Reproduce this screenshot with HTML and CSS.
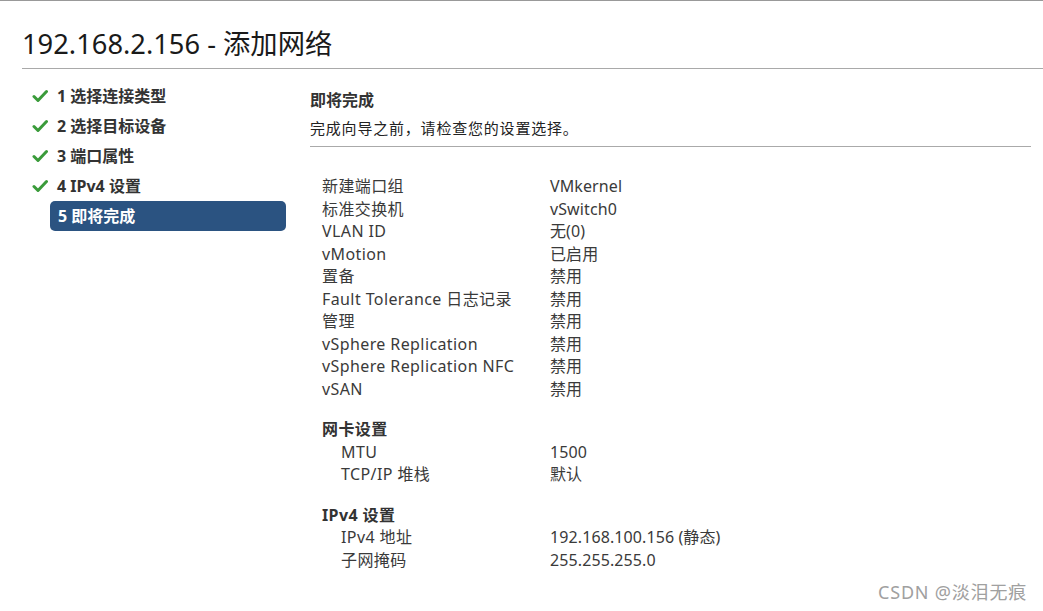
FILE: index.html
```html
<!DOCTYPE html>
<html lang="zh">
<head>
<meta charset="utf-8">
<title>添加网络</title>
<link rel="stylesheet" href="styles.css">
</head>
<body>
<div class="page">
  <header class="header">
    <h1 class="title">192.168.2.156 - 添加网络</h1>
  </header>
  <div class="main">
    <nav class="steps">
      <div class="step done"><span class="check"><svg viewBox="0 0 16 16" width="16" height="16"><path d="M2 8.5 L6 12.5 L14.5 3.5" fill="none" stroke="#3a9b3a" stroke-width="3" stroke-linecap="round" stroke-linejoin="round"/></svg></span><span class="step-label">1 选择连接类型</span></div>
      <div class="step done"><span class="check"><svg viewBox="0 0 16 16" width="16" height="16"><path d="M2 8.5 L6 12.5 L14.5 3.5" fill="none" stroke="#3a9b3a" stroke-width="3" stroke-linecap="round" stroke-linejoin="round"/></svg></span><span class="step-label">2 选择目标设备</span></div>
      <div class="step done"><span class="check"><svg viewBox="0 0 16 16" width="16" height="16"><path d="M2 8.5 L6 12.5 L14.5 3.5" fill="none" stroke="#3a9b3a" stroke-width="3" stroke-linecap="round" stroke-linejoin="round"/></svg></span><span class="step-label">3 端口属性</span></div>
      <div class="step done"><span class="check"><svg viewBox="0 0 16 16" width="16" height="16"><path d="M2 8.5 L6 12.5 L14.5 3.5" fill="none" stroke="#3a9b3a" stroke-width="3" stroke-linecap="round" stroke-linejoin="round"/></svg></span><span class="step-label">4 IPv4 设置</span></div>
      <div class="step active"><span class="check"></span><span class="step-label">5 即将完成</span></div>
    </nav>
    <section class="content">
      <div class="content-head">
        <h2 class="content-title">即将完成</h2>
        <p class="content-desc">完成向导之前，请检查您的设置选择。</p>
      </div>
      <div class="summary">
        <div class="grid">
          <div class="k">新建端口组</div><div class="v">VMkernel</div>
          <div class="k">标准交换机</div><div class="v">vSwitch0</div>
          <div class="k">VLAN ID</div><div class="v">无(0)</div>
          <div class="k">vMotion</div><div class="v">已启用</div>
          <div class="k">置备</div><div class="v">禁用</div>
          <div class="k">Fault Tolerance 日志记录</div><div class="v">禁用</div>
          <div class="k">管理</div><div class="v">禁用</div>
          <div class="k">vSphere Replication</div><div class="v">禁用</div>
          <div class="k">vSphere Replication NFC</div><div class="v">禁用</div>
          <div class="k">vSAN</div><div class="v">禁用</div>
        </div>
        <div class="group">
          <div class="group-title">网卡设置</div>
          <div class="grid sub">
            <div class="k">MTU</div><div class="v">1500</div>
            <div class="k">TCP/IP 堆栈</div><div class="v">默认</div>
          </div>
        </div>
        <div class="group">
          <div class="group-title">IPv4 设置</div>
          <div class="grid sub">
            <div class="k">IPv4 地址</div><div class="v">192.168.100.156 (静态)</div>
            <div class="k">子网掩码</div><div class="v">255.255.255.0</div>
          </div>
        </div>
      </div>
    </section>
  </div>
  <div class="watermark">CSDN @淡泪无痕</div>
</div>
</body>
</html>
```

FILE: styles.css
```css
html, body {
  margin: 0;
  padding: 0;
  background: #ffffff;
}
body {
  font-family: "Noto Sans", "Noto Sans CJK SC", sans-serif;
  color: #333333;
}
.page {
  position: relative;
  width: 1043px;
  height: 611px;
  border-top: 1px solid #999999;
  box-sizing: border-box;
  overflow: hidden;
}
.header {
  margin-left: 22px;
  border-bottom: 1px solid #a9a9a9;
  height: 68px;
  box-sizing: border-box;
  display: flex;
  align-items: flex-end;
}
.title {
  margin: 0 0 6px 0;
  font-size: 27.3px;
  font-weight: 400;
  line-height: 36px;
  color: #1a1a1a;
}
.main {
  display: flex;
  gap: 24px;
  padding: 12px 0 0 22px;
}
.steps {
  width: 264px;
  display: flex;
  flex-direction: column;
}
.step {
  display: flex;
  align-items: center;
  height: 30px;
}
.check {
  width: 28px;
  display: flex;
  align-items: center;
  padding-left: 10px;
  box-sizing: border-box;
}
.step-label {
  flex: 1;
  height: 30px;
  line-height: 31px;
  padding-left: 7px;
  border-radius: 5px;
  font-size: 16px;
  font-weight: 700;
  color: #333333;
}
.step.active .step-label {
  background: #2b5381;
  color: #ffffff;
  padding-left: 8px;
}
.content {
  flex: 1;
  margin-right: 12px;
}
.content-head {
  border-bottom: 1px solid #aaaaaa;
  padding-top: 9px;
  padding-bottom: 8px;
}
.content-title {
  margin: 0;
  font-size: 16px;
  font-weight: 700;
  line-height: 20px;
  color: #333333;
}
.content-desc {
  margin: 8px 0 0 0;
  font-size: 15px;
  line-height: 20px;
  letter-spacing: 0.8px;
  color: #222222;
}
.summary {
  padding: 28px 0 0 12px;
  font-size: 16px;
  letter-spacing: 0.4px;
  color: #3a3a3a;
}
.grid {
  display: grid;
  grid-template-columns: 228px auto;
  grid-auto-rows: 22.5px;
  line-height: 22.5px;
}
.grid .v {
  letter-spacing: 0.1px;
}
.grid.sub {
  grid-template-columns: 209px auto;
  padding-left: 19px;
}
.group {
  margin-top: 18px;
}
.group-title {
  height: 22.5px;
  line-height: 22.5px;
  font-weight: 700;
  color: #333333;
}
.watermark {
  position: absolute;
  right: 16px;
  bottom: 7px;
  font-size: 18px;
  letter-spacing: 0.8px;
  color: #a0a0a0;
  font-family: "Noto Sans", "Noto Sans CJK SC", sans-serif;
}
```
